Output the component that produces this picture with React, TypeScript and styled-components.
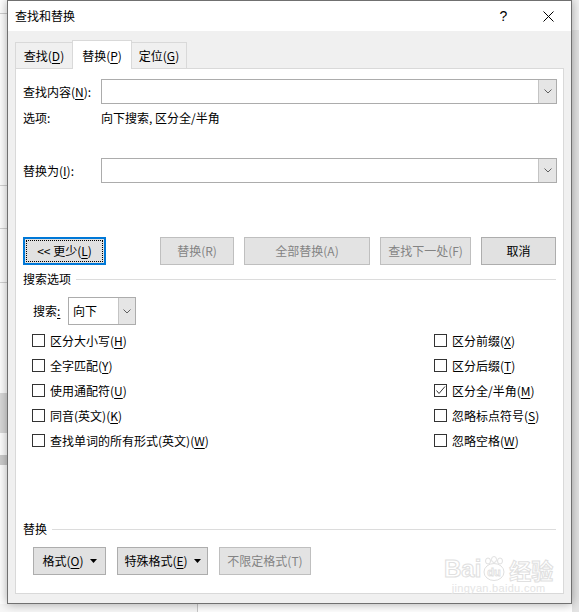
import React from "react";
import styled, { createGlobalStyle, css } from "styled-components";

const Global = createGlobalStyle`
  html, body { margin: 0; padding: 0; }
  body {
    font-family: "Noto Sans CJK SC", "Noto Sans", sans-serif;
    font-size: 12px;
    color: #000;
    background: #fff;
  }
  * { box-sizing: border-box; }
`;

const Desktop = styled.div`
  position: relative;
  width: 579px;
  height: 612px;
  overflow: hidden;
  display: flex;
  align-items: flex-start;
  background: linear-gradient(to right, #f7f7f7 0, #f7f7f7 197px, #c8c8c8 197px, #c8c8c8 198px, #ffffff 198px);
`;

const DocEdge = styled.div`
  flex: none;
  width: 7px;
  height: 612px;
  background:
    linear-gradient(to bottom,
      #ffffff 0, #ffffff 13px, #cfcfcf 13px, #cfcfcf 14px,
      #ffffff 14px, #ffffff 185px, #d4d4d4 185px, #d4d4d4 186px,
      #ffffff 186px, #ffffff 228px, #d4d4d4 228px, #d4d4d4 229px,
      #ffffff 229px, #ffffff 282px, #d4d4d4 282px, #d4d4d4 283px,
      #ffffff 283px, #ffffff 393px, #dadada 393px, #dadada 433px,
      #ffffff 433px, #ffffff 455px, #cdcdcd 455px, #cdcdcd 465px,
      #ffffff 465px, #ffffff 604px, #f7f7f7 604px);
`;

const RightEdge = styled.div`
  flex: none;
  width: 8px;
  height: 612px;
  background: linear-gradient(to bottom, #f2f2f2 0, #f2f2f2 30px, #e4e4e4 30px);
`;

const Dialog = styled.div`
  flex: none;
  width: 565px;
  height: 604px;
  display: flex;
  flex-direction: column;
  border: 1px solid #707070;
  background: #f0f0f0;
  box-shadow: 0 0 10px rgba(0, 0, 0, 0.35);
  position: relative;
  z-index: 1;
`;

const TitleBar = styled.div`
  height: 30px;
  flex: none;
  display: flex;
  align-items: center;
  background: #fff;
  padding-left: 7px;
`;

const TitleText = styled.div`
  flex: 1;
  font-size: 12px;
  line-height: 16px;
`;

const TitleButton = styled.div`
  width: 45px;
  height: 30px;
  display: flex;
  align-items: center;
  justify-content: center;
  font-family: "Liberation Sans", "Noto Sans", sans-serif;
  font-size: 14px;
  color: #000;
`;

const Body = styled.div`
  flex: 1;
  display: flex;
  flex-direction: column;
  padding: 9px 7px 9px 7px;
`;

const TabRow = styled.div`
  height: 28px;
  flex: none;
  display: flex;
  align-items: flex-end;
  position: relative;
  z-index: 2;
`;

const Tab = styled.div<{ $active?: boolean; $w: number }>`
  width: ${(p) => p.$w}px;
  height: 26px;
  display: flex;
  align-items: center;
  justify-content: center;
  border: 1px solid #d9d9d9;
  border-bottom: none;
  background: #f0f0f0;
  line-height: 16px;
  & + & { margin-left: -1px; }
  ${(p) =>
    p.$active &&
    css`
      height: 29px;
      margin-bottom: -1px;
      padding-top: 1px;
      background: #fff;
      position: relative;
      z-index: 1;
    `}
`;

const U = styled.span`
  text-decoration: underline;
  text-underline-offset: 2px;
`;

const Panel = styled.div`
  flex: none;
  width: 549px;
  height: 526px;
  display: flex;
  flex-direction: column;
  background: #fff;
  border: 1px solid #d9d9d9;
  padding: 10px 6px 18px 7px;
`;

const FieldRow = styled.div<{ $mt?: number }>`
  display: flex;
  align-items: center;
  height: 25px;
  margin-top: ${(p) => p.$mt ?? 0}px;
`;

const Label = styled.div<{ $w: number }>`
  flex: none;
  width: ${(p) => p.$w}px;
  line-height: 16px;
`;

const Combo = styled.div`
  flex: 1;
  height: 25px;
  display: flex;
  justify-content: flex-end;
  border: 1px solid #acacac;
  background: #fff;
`;

const DropPart = styled.div<{ $w?: number }>`
  width: ${(p) => p.$w ?? 18}px;
  height: 100%;
  display: flex;
  align-items: center;
  justify-content: center;
  background: #e5e5e5;
  border-left: 1px solid #c4c4c4;
`;

const OptionsRow = styled.div`
  display: flex;
  align-items: center;
  height: 18px;
  margin-top: 5px;
  line-height: 16px;
`;

const ButtonRow = styled.div<{ $mt: number; $pl?: number; $gap: number }>`
  display: flex;
  align-items: center;
  margin-top: ${(p) => p.$mt}px;
  padding-left: ${(p) => p.$pl ?? 0}px;
  gap: ${(p) => p.$gap}px;
`;

const ButtonGroup = styled.div`
  display: flex;
  gap: 10px;
  margin-left: auto;
  margin-right: 1px;
`;

const Button = styled.div<{ $w: number; $disabled?: boolean; $focused?: boolean }>`
  position: relative;
  flex: none;
  width: ${(p) => p.$w}px;
  height: 28px;
  display: flex;
  align-items: center;
  justify-content: center;
  gap: 6px;
  background: #e1e1e1;
  border: 1px solid #adadad;
  line-height: 16px;
  white-space: nowrap;
  color: ${(p) => (p.$disabled ? "#838383" : "#000")};
  ${(p) =>
    p.$disabled &&
    css`
      border-color: #bfbfbf;
      background: #e3e3e3;
    `}
  ${(p) =>
    p.$focused &&
    css`
      border: 2px solid #0078d7;
      &::after {
        content: "";
        position: absolute;
        inset: 1px;
        border: 1px dotted #000;
      }
    `}
`;

const SectionHeader = styled.div<{ $mt?: number }>`
  display: flex;
  align-items: center;
  gap: 5px;
  height: 16px;
  margin-top: ${(p) => p.$mt ?? 0}px;
  line-height: 16px;
  margin-right: 1px;
  &::after {
    content: "";
    flex: 1;
    height: 1px;
    background: #dcdcdc;
  }
`;

const SearchRow = styled.div`
  display: flex;
  align-items: center;
  height: 28px;
  margin-top: 10px;
  padding-left: 10px;
`;

const Select = styled.div`
  width: 68px;
  height: 28px;
  display: flex;
  border: 1px solid #acacac;
  background: #fff;
`;

const SelectValue = styled.div`
  flex: 1;
  display: flex;
  align-items: center;
  padding-left: 4px;
  line-height: 16px;
`;

const CheckGrid = styled.div`
  display: grid;
  grid-template-columns: 402px 1fr;
  grid-template-rows: repeat(5, 25px);
  grid-auto-flow: column;
  margin-top: 3px;
  padding-left: 9px;
`;

const CheckItem = styled.div`
  display: flex;
  align-items: center;
  gap: 5px;
  line-height: 16px;
`;

const Box = styled.div`
  width: 13px;
  height: 13px;
  flex: none;
  border: 1px solid #333;
  background: #fff;
  display: flex;
  align-items: center;
  justify-content: center;
`;

const BottomSection = styled.div`
  margin-top: auto;
  display: flex;
  flex-direction: column;
`;

const Watermark = styled.div`
  position: absolute;
  left: 444px;
  top: 556px;
  z-index: 3;
  display: flex;
  flex-direction: column;
  align-items: center;
  color: #e4e4e4;
  pointer-events: none;
`;

const WatermarkMain = styled.div`
  display: flex;
  align-items: center;
  font-family: "Liberation Sans", sans-serif;
  font-size: 24px;
  font-weight: bold;
  line-height: 26px;
  color: #fff;
  -webkit-text-stroke: 1px #e0e0e0;
`;

const WatermarkCjk = styled.span`
  font-family: "Noto Sans CJK SC", sans-serif;
  font-size: 22px;
  font-weight: bold;
  margin-left: 2px;
`;

const WatermarkUrl = styled.div`
  font-family: "Liberation Sans", sans-serif;
  font-size: 11px;
  line-height: 12px;
  color: #e4e4e4;
  letter-spacing: 0.3px;
`;

const Chevron = () => (
  <svg width="8" height="5" viewBox="0 0 8 5">
    <polyline points="0.5,0.5 4,4 7.5,0.5" fill="none" stroke="#606060" strokeWidth="1" />
  </svg>
);

const Caret = () => (
  <svg width="7" height="4" viewBox="0 0 7 4">
    <polygon points="0,0 7,0 3.5,4" fill="#000" />
  </svg>
);

const CloseIcon = () => (
  <svg width="11" height="11" viewBox="0 0 11 11">
    <line x1="0.5" y1="0.5" x2="10.5" y2="10.5" stroke="#000" strokeWidth="1" />
    <line x1="10.5" y1="0.5" x2="0.5" y2="10.5" stroke="#000" strokeWidth="1" />
  </svg>
);

const Paw = () => (
  <svg width="26" height="26" viewBox="0 0 26 26">
    <g fill="#fff" stroke="#e0e0e0" strokeWidth="1">
      <ellipse cx="7" cy="5" rx="2.5" ry="3" />
      <ellipse cx="13" cy="3.5" rx="2.5" ry="3" />
      <ellipse cx="19" cy="5" rx="2.5" ry="3" />
      <ellipse cx="13" cy="16" rx="10" ry="8.5" />
    </g>
    <text x="13" y="20" textAnchor="middle" fontSize="11" fontFamily="Liberation Sans, sans-serif" fontWeight="bold" fill="#fff" stroke="#e0e0e0" strokeWidth="0.8">du</text>
  </svg>
);

const Check = ({ label, k, checked }: { label: string; k: string; checked?: boolean }) => (
  <CheckItem>
    <Box>
      {checked && (
        <svg width="11" height="11" viewBox="0 0 11 11">
          <polyline points="1.5,5.5 4,8.5 10,1.5" fill="none" stroke="#333" strokeWidth="1" />
        </svg>
      )}
    </Box>
    <span>
      {label}(<U>{k}</U>)
    </span>
  </CheckItem>
);

export default function App() {
  return (
    <>
      <Global />
      <Desktop>
        <DocEdge />
        <Dialog>
          <TitleBar>
            <TitleText>查找和替换</TitleText>
            <TitleButton>?</TitleButton>
            <TitleButton>
              <CloseIcon />
            </TitleButton>
          </TitleBar>
          <Body>
            <TabRow>
              <Tab $w={58}>
                <span>
                  查找(<U>D</U>)
                </span>
              </Tab>
              <Tab $w={60} $active>
                <span>
                  替换(<U>P</U>)
                </span>
              </Tab>
              <Tab $w={56}>
                <span>
                  定位(<U>G</U>)
                </span>
              </Tab>
            </TabRow>
            <Panel>
              <FieldRow>
                <Label $w={78}>
                  查找内容(<U>N</U>):
                </Label>
                <Combo>
                  <DropPart>
                    <Chevron />
                  </DropPart>
                </Combo>
              </FieldRow>
              <OptionsRow>
                <Label $w={78}>选项:</Label>
                <span>向下搜索, 区分全/半角</span>
              </OptionsRow>
              <FieldRow $mt={31}>
                <Label $w={78}>
                  替换为(<U>I</U>):
                </Label>
                <Combo>
                  <DropPart>
                    <Chevron />
                  </DropPart>
                </Combo>
              </FieldRow>
              <ButtonRow $mt={54} $gap={0}>
                <Button $w={83} $focused>
                  <span>
                    &lt;&lt; 更少(<U>L</U>)
                  </span>
                </Button>
                <ButtonGroup>
                  <Button $w={74} $disabled>
                    替换(R)
                  </Button>
                  <Button $w={126} $disabled>
                    全部替换(A)
                  </Button>
                  <Button $w={91} $disabled>
                    查找下一处(F)
                  </Button>
                  <Button $w={75}>取消</Button>
                </ButtonGroup>
              </ButtonRow>
              <SectionHeader $mt={6}>搜索选项</SectionHeader>
              <SearchRow>
                <Label $w={35}>
                  搜索<U>:</U>
                </Label>
                <Select>
                  <SelectValue>向下</SelectValue>
                  <DropPart $w={17}>
                    <Chevron />
                  </DropPart>
                </Select>
              </SearchRow>
              <CheckGrid>
                <Check label="区分大小写" k="H" />
                <Check label="全字匹配" k="Y" />
                <Check label="使用通配符" k="U" />
                <Check label="同音(英文)" k="K" />
                <Check label="查找单词的所有形式(英文)" k="W" />
                <Check label="区分前缀" k="X" />
                <Check label="区分后缀" k="T" />
                <Check label="区分全/半角" k="M" checked />
                <Check label="忽略标点符号" k="S" />
                <Check label="忽略空格" k="W" />
              </CheckGrid>
              <BottomSection>
                <SectionHeader>替换</SectionHeader>
                <ButtonRow $mt={10} $pl={10} $gap={11}>
                  <Button $w={73}>
                    <span>
                      格式(<U>O</U>)
                    </span>
                    <Caret />
                  </Button>
                  <Button $w={91}>
                    <span>
                      特殊格式(<U>E</U>)
                    </span>
                    <Caret />
                  </Button>
                  <Button $w={92} $disabled>
                    不限定格式(T)
                  </Button>
                </ButtonRow>
              </BottomSection>
            </Panel>
          </Body>
        </Dialog>
        <RightEdge />
        <Watermark>
          <WatermarkMain>
            Bai
            <Paw />
            <WatermarkCjk>经验</WatermarkCjk>
          </WatermarkMain>
          <WatermarkUrl>jingyan.baidu.com</WatermarkUrl>
        </Watermark>
      </Desktop>
    </>
  );
}
